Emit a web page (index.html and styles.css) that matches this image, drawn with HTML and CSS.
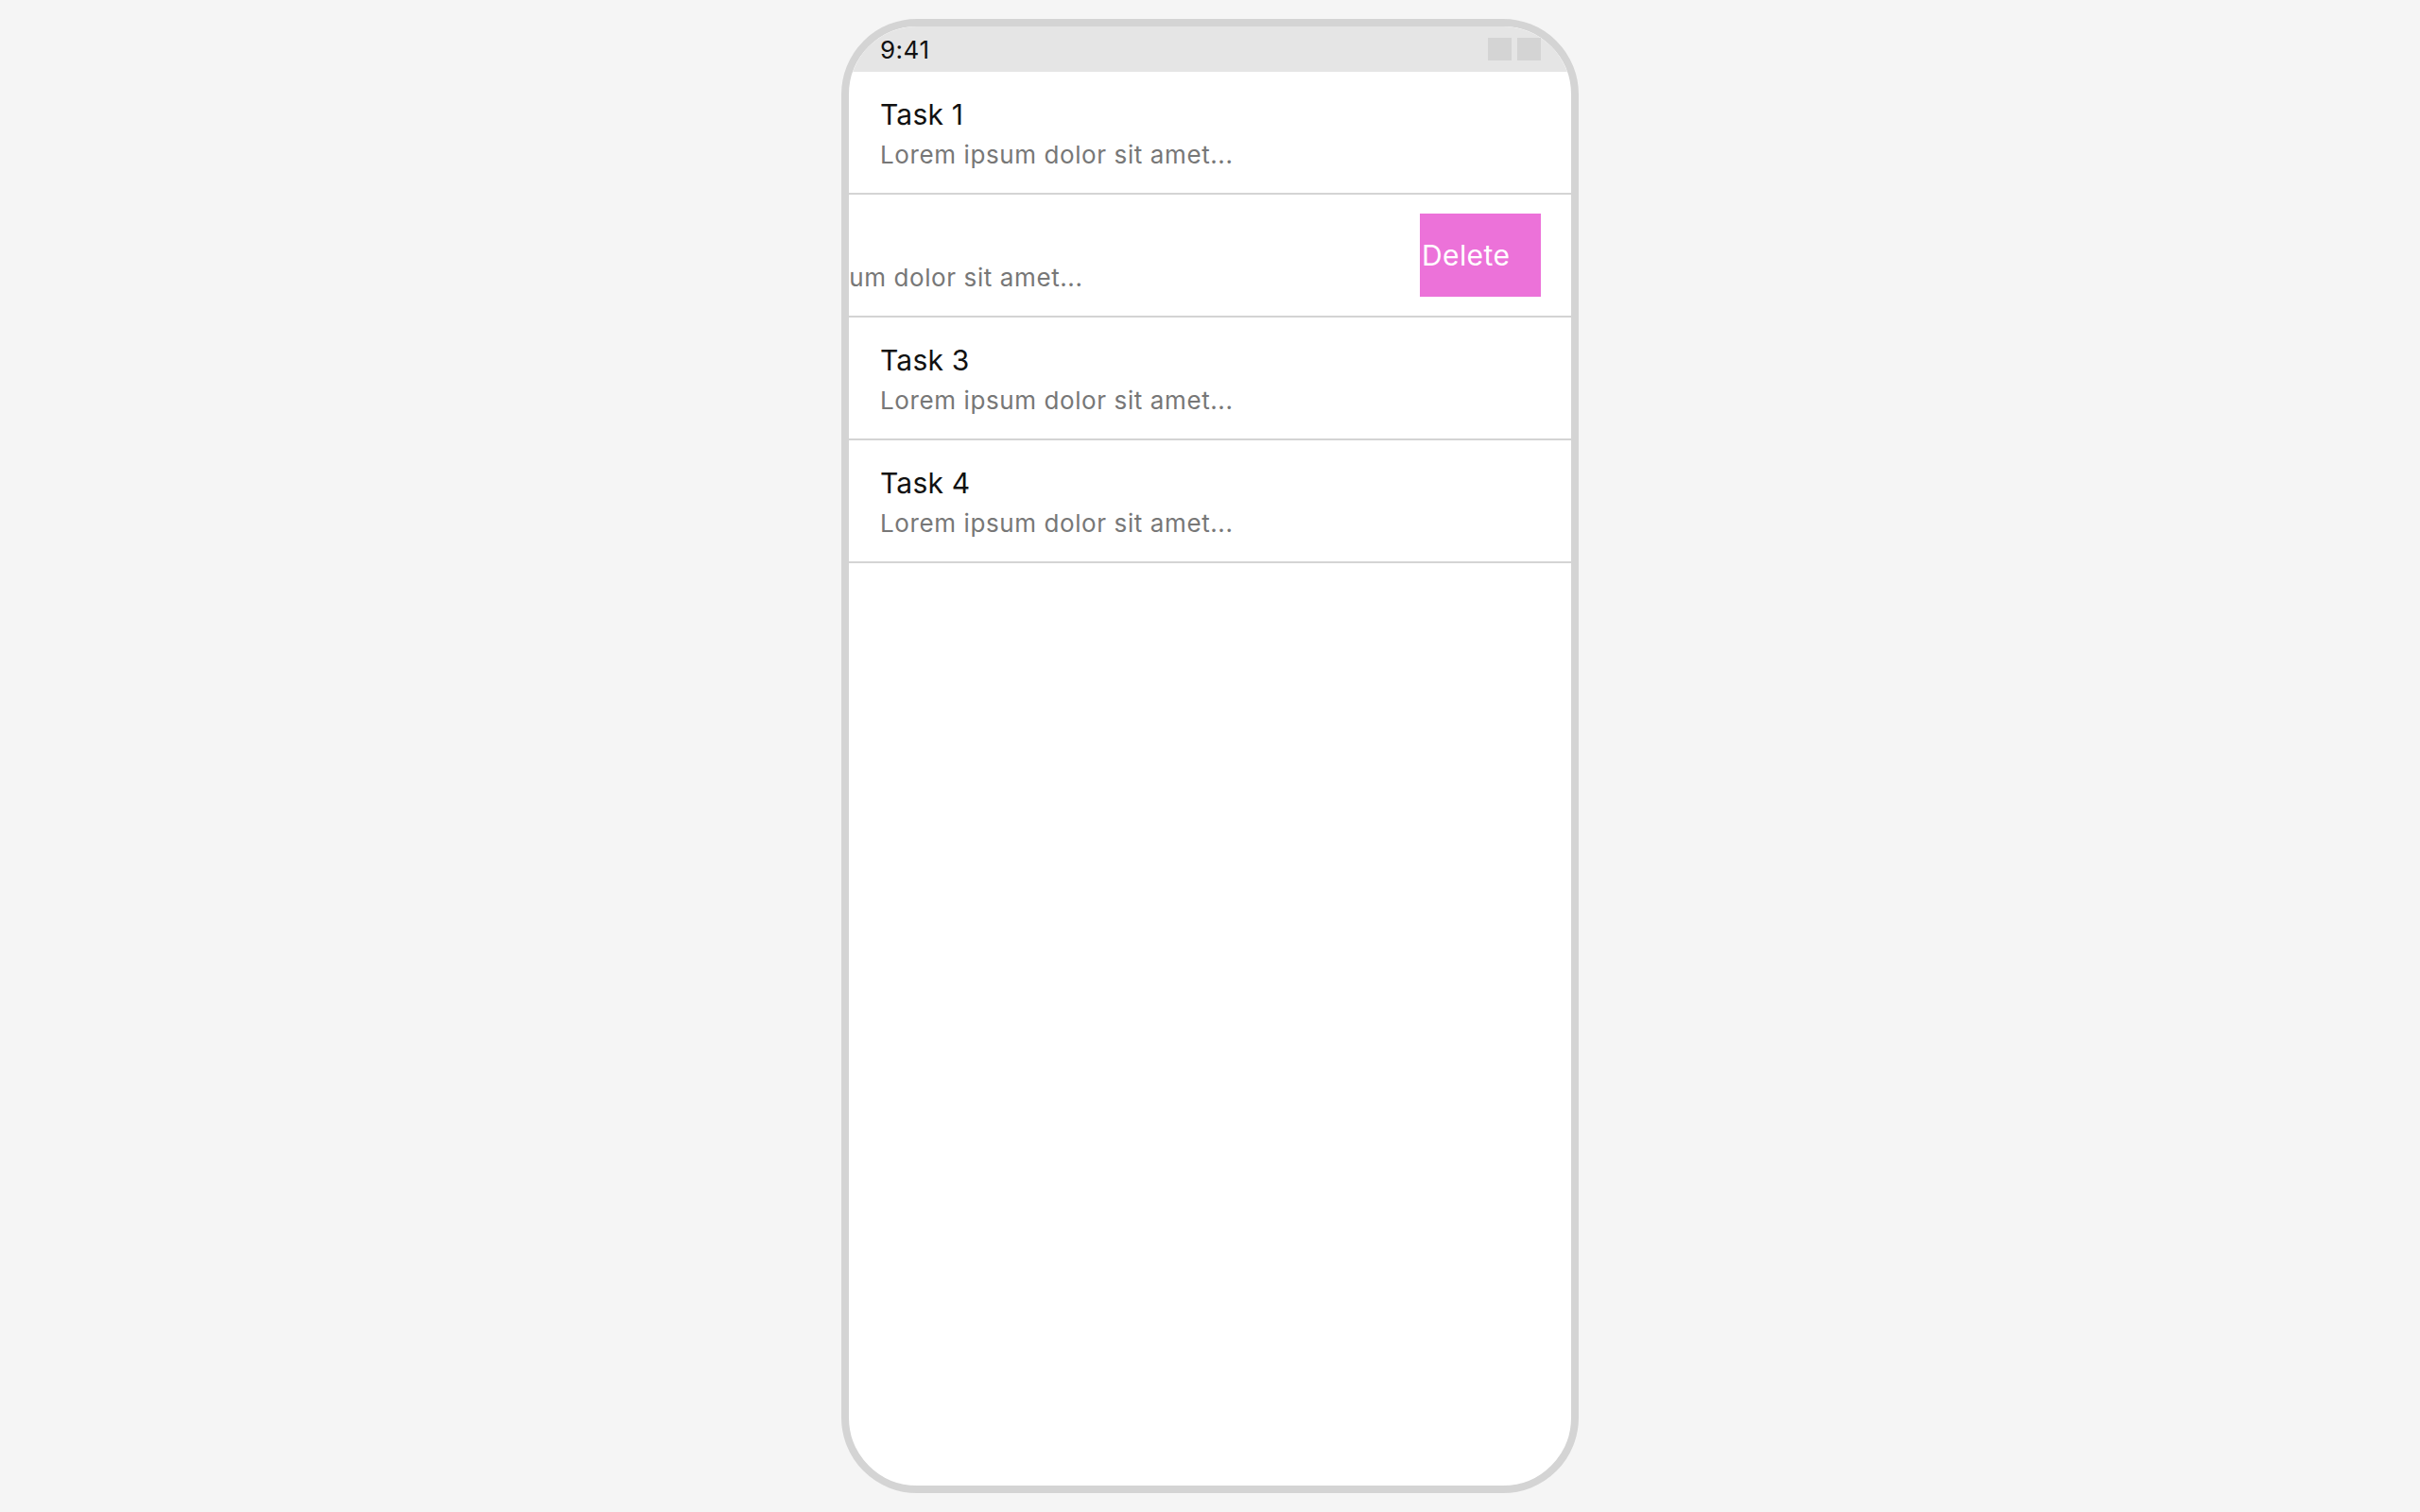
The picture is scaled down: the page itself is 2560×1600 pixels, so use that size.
FILE: index.html
```html
<!DOCTYPE html>
<html>
    <head>
        <meta charset="utf-8">
        <title>Tasks</title>
        <link rel="stylesheet" href="styles.css">
    </head>
    <body>
        <div class="phone">
            <div class="statusbar">
                <span class="time">9:41</span>
                <span class="icons"><i></i><i></i></span>
            </div>
            <ul class="tasks">
                <li class="task">
                    <div class="task-body">
                        <p class="title">Task 1</p>
                        <p class="desc">Lorem ipsum dolor sit amet...</p>
                    </div>
                </li>
                <li class="task swiped">
                    <div class="task-body">
                        <p class="title">Task 2</p>
                        <p class="desc">Lorem ipsum dolor sit amet...</p>
                    </div>
                    <a class="delete" href="javascript:;">Delete</a>
                </li>
                <li class="task">
                    <div class="task-body">
                        <p class="title">Task 3</p>
                        <p class="desc">Lorem ipsum dolor sit amet...</p>
                    </div>
                </li>
                <li class="task">
                    <div class="task-body">
                        <p class="title">Task 4</p>
                        <p class="desc">Lorem ipsum dolor sit amet...</p>
                    </div>
                </li>
            </ul>
        </div>
    </body>
</html>
```

FILE: styles.css
```css
body,div,ul,li,p{
    margin:0;
    padding:0;
}
body{
    height:1600px;
    display:flex;
    align-items:center;
    justify-content:center;
    background:#f5f5f5;
    font-family:Inter,"Noto Sans",sans-serif;
}
ul{
    list-style-type:none;
}
.phone{
    width:764px;
    height:1544px;
    border:8px solid #d4d4d4;
    border-radius:80px;
    background:#fff;
    overflow:hidden;
}
.statusbar{
    height:48px;
    padding:0 32px 0 33px;
    display:flex;
    align-items:center;
    justify-content:space-between;
    background:#e5e5e5;
}
.statusbar .time{
    font-size:26px;
    letter-spacing:0.5px;
    color:#111;
}
.statusbar .icons{
    display:flex;
    gap:6px;
}
.statusbar .icons i{
    width:25px;
    height:24px;
    background:#d4d4d4;
}
.task{
    position:relative;
    height:128px;
    border-bottom:2px solid #d4d4d4;
    overflow:hidden;
}
.task-body{
    padding:24px 33px 22px;
    white-space:nowrap;
}
.task .title{
    font-size:30px;
    line-height:42px;
    letter-spacing:0.2px;
    color:#111;
}
.task .desc{
    margin-top:4px;
    font-size:26px;
    line-height:36px;
    letter-spacing:0.6px;
    color:#777;
}
/* row dragged to the left, showing the action behind it */
.swiped .task-body{
    transform:translateX(-159px);
}
.delete{
    position:absolute;
    top:20px;
    right:32px;
    width:128px;
    height:88px;
    display:flex;
    align-items:center;
    background:#ec72d9;
    color:#fff;
    font-size:30px;
    letter-spacing:0.4px;
    text-decoration:none;
    padding-left:2px;
    box-sizing:border-box;
}
```
